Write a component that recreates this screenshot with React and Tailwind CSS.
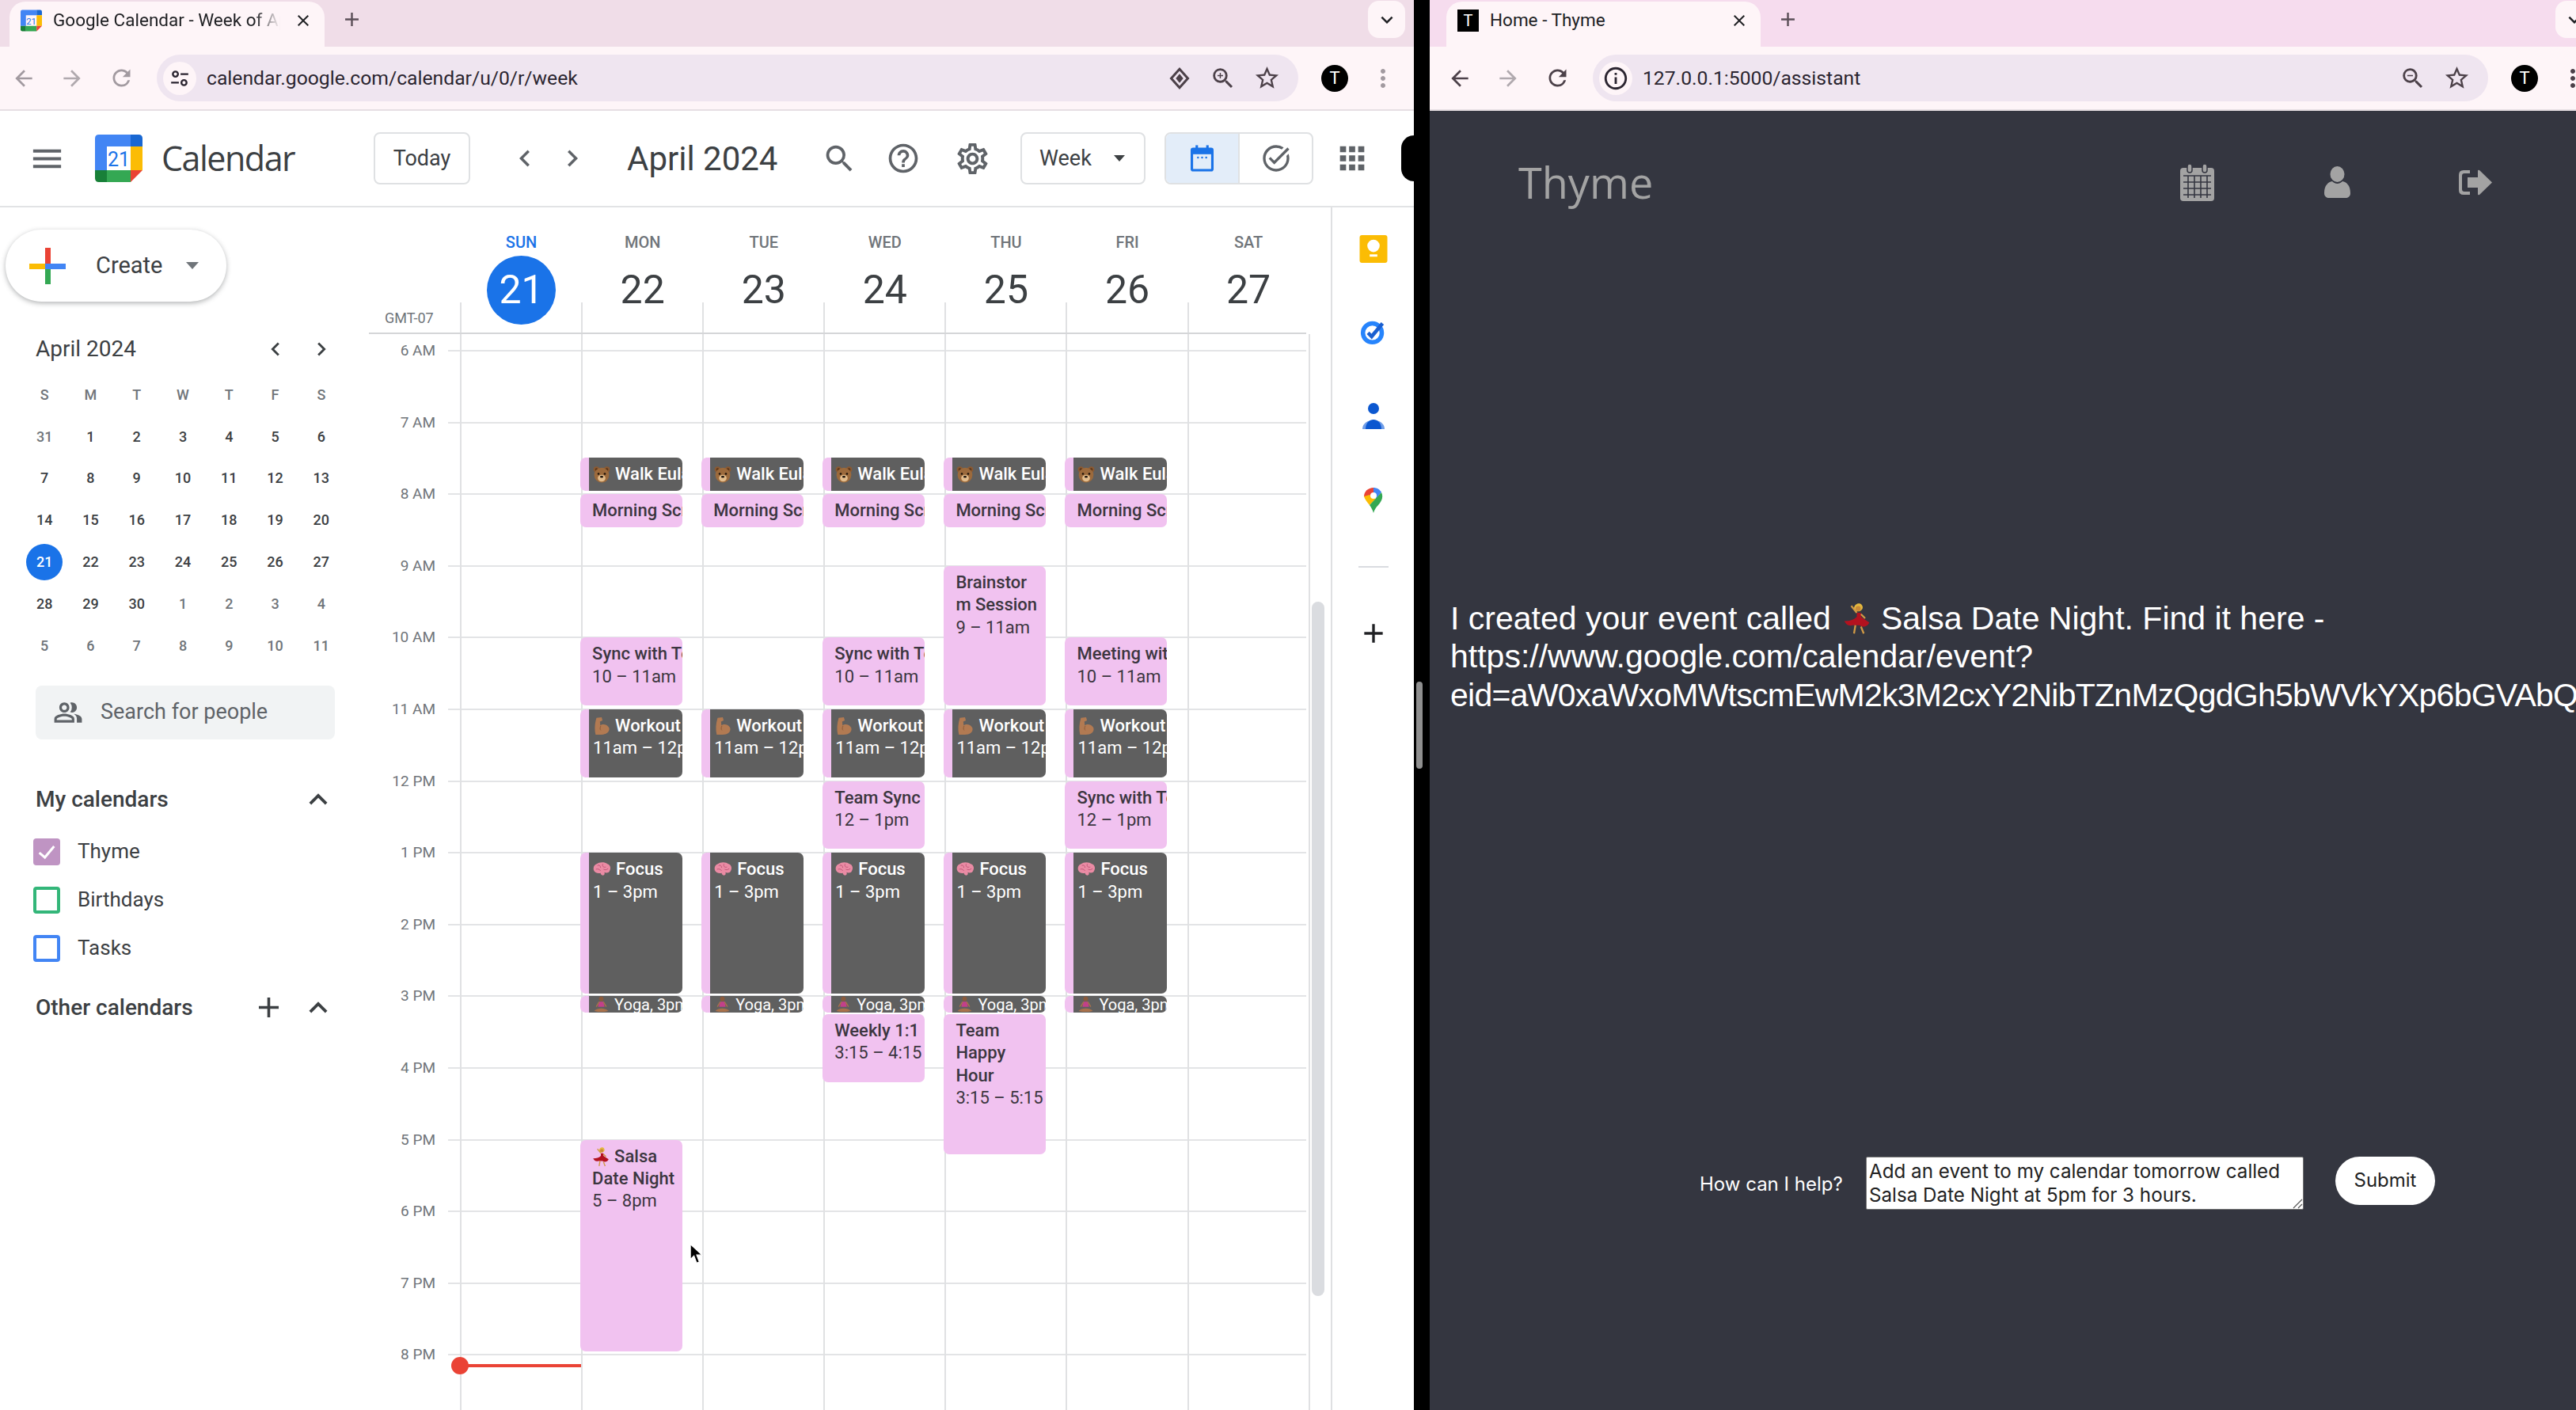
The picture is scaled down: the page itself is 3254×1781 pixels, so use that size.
import React from 'react';
import {
    MdAdd, MdApps, MdArrowBack, MdArrowForward, MdChevronLeft, MdChevronRight, MdClose, MdExpandLess, MdHelpOutline,
    MdInfoOutline, MdKeyboardArrowDown, MdMenu, MdMoreVert, MdOutlinePeopleAlt, MdOutlineSettings, MdOutlineTaskAlt,
    MdRefresh, MdSearch, MdStarBorder, MdZoomIn, MdZoomOut
} from 'react-icons/md';

const HOUR = 90.6;
const HOURS = ['6 AM', '7 AM', '8 AM', '9 AM', '10 AM', '11 AM', '12 PM', '1 PM', '2 PM', '3 PM', '4 PM', '5 PM', '6 PM', '7 PM', '8 PM', ''];

const Bear = () => (
    <svg viewBox="0 0 20 20" className="w-[22px] h-[22px] shrink-0">
        <circle cx="4" cy="4.5" r="3.4" fill="#8a5a33" />
        <circle cx="16" cy="4.5" r="3.4" fill="#8a5a33" />
        <circle cx="4" cy="4.5" r="1.6" fill="#5a3519" />
        <circle cx="16" cy="4.5" r="1.6" fill="#5a3519" />
        <ellipse cx="10" cy="11" rx="8.5" ry="8.5" fill="#9c6a3c" />
        <ellipse cx="10" cy="14.5" rx="4.4" ry="3.8" fill="#e3bd8d" />
        <circle cx="6.4" cy="9.5" r="1.2" fill="#1a1008" />
        <circle cx="13.6" cy="9.5" r="1.2" fill="#1a1008" />
        <ellipse cx="10" cy="13" rx="1.9" ry="1.2" fill="#1a1008" />
    </svg>
);

const Muscle = () => (
    <svg viewBox="0 0 20 22" className="w-[22px] h-[24px] shrink-0">
        <path d="M4 1.5 L10 1 L11 4.5 L8 6 L8.5 10.5 C11 8 16.5 9 18.5 13 C20 18 15 21 10 21 L3 21 C1.5 15 2 8 4 1.5 Z" fill="#b27a52" />
        <path d="M9 11 C8 13 8 15 9 16" stroke="#8c5a38" strokeWidth="0.9" fill="none" />
    </svg>
);

const Brain = () => (
    <svg viewBox="0 0 24 20" className="w-[23px] h-[22px] shrink-0">
        <path d="M5 3 C8 0 16 0 19 3 C23 4 24 9 22 12 C21 15 17 15 15 14 C16 16 15 18 13 18 C11 18 10 16 10 15 C6 16 2 14 1 11 C0 7 2 4 5 3 Z" fill="#ea8ba4" />
        <path d="M6 5 C8 4 10 5 10 8 M13 3 C12 6 14 8 17 7 M4 10 C6 9 9 10 10 12 M14 10 C16 11 18 11 20 9" stroke="#bf5577" strokeWidth="1" fill="none" />
    </svg>
);

const Yoga = () => (
    <svg viewBox="0 0 20 20" className="w-[21px] h-[21px] shrink-0">
        <circle cx="10" cy="3.5" r="2.8" fill="#8a5a3c" />
        <path d="M7.5 7 L12.5 7 L14 13 L6 13 Z" fill="#c2408a" />
        <path d="M1.5 18 C5 14 15 14 18.5 18 L14 19 L6 19 Z" fill="#a9714b" />
        <path d="M7.5 7 L4 13 M12.5 7 L16 13" stroke="#a9714b" strokeWidth="1.4" />
    </svg>
);

const Dancer = ({ className }) => (
    <svg viewBox="0 0 20 24" className={className}>
        <path d="M8 5 C8 1 13 0 14 3 C15 5 13 7 11 7 C9 7 8 6 8 5 Z" fill="#e4b83f" />
        <circle cx="11" cy="5" r="1.9" fill="#c98a38" />
        <path d="M10 8 L13 8 L13 11 L19 15 C18 18 14 19 12 17 L7 17 C4 18 2 16 1 14 C5 14 8 13 10 11 Z" fill="#b3121f" />
        <path d="M10 8 L6 3 M13 9 L16 12 M9 17 L8 23 M13 18 L15 23" stroke="#d19a45" strokeWidth="1.3" fill="none" />
    </svg>
);

// top and height in hours from 6am
const walk = { dark: true, top: 1.49, h: 0.46, icon: <Bear />, lines: ['Walk Eulah'] };
const morning = { top: 2.0, h: 0.46, lines: ['Morning Scrum'] };
const workout = { dark: true, top: 5.0, h: 0.95, icon: <Muscle />, lines: ['Workout', '11am – 12pm'] };
const focus = { dark: true, top: 7.0, h: 1.96, icon: <Brain />, lines: ['Focus', '1 – 3pm'] };
const yoga = { dark: true, yoga: true, top: 9.0, h: 0.23, icon: <Yoga />, lines: ['Yoga, 3pm'] };

const DAYS = [
    { name: 'SUN', num: 21, today: true, events: [] },
    {
        name: 'MON', num: 22, events: [walk, morning, { top: 4.0, h: 0.95, lines: ['Sync with Team', '10 – 11am'] }, workout, focus, yoga,
            { top: 11.0, h: 2.95, dancer: true, lines: ['Salsa', 'Date Night', '5 – 8pm'] }]
    },
    { name: 'TUE', num: 23, events: [walk, morning, workout, focus, yoga] },
    {
        name: 'WED', num: 24, events: [walk, morning, { top: 4.0, h: 0.95, lines: ['Sync with Team', '10 – 11am'] }, workout,
            { top: 6.0, h: 0.94, lines: ['Team Sync', '12 – 1pm'] }, focus, yoga, { top: 9.25, h: 0.95, lines: ['Weekly 1:1', '3:15 – 4:15'] }]
    },
    {
        name: 'THU', num: 25, events: [walk, morning, { top: 3.0, h: 1.95, lines: ['Brainstor', 'm Session', '9 – 11am'] }, workout, focus, yoga,
            { top: 9.25, h: 1.95, lines: ['Team', 'Happy', 'Hour', '3:15 – 5:15'] }]
    },
    {
        name: 'FRI', num: 26, events: [walk, morning, { top: 4.0, h: 0.95, lines: ['Meeting with', '10 – 11am'] }, workout,
            { top: 6.0, h: 0.94, lines: ['Sync with Team', '12 – 1pm'] }, focus, yoga]
    },
    { name: 'SAT', num: 27, events: [] },
];

const MINI = [
    [['31', 1], ['1'], ['2'], ['3'], ['4'], ['5'], ['6']],
    [['7'], ['8'], ['9'], ['10'], ['11'], ['12'], ['13']],
    [['14'], ['15'], ['16'], ['17'], ['18'], ['19'], ['20']],
    [['21', 2], ['22'], ['23'], ['24'], ['25'], ['26'], ['27']],
    [['28'], ['29'], ['30'], ['1', 1], ['2', 1], ['3', 1], ['4', 1]],
    [['5', 1], ['6', 1], ['7', 1], ['8', 1], ['9', 1], ['10', 1], ['11', 1]],
];

const ChromeBar = ({ tabIcon, title, url, siteIcon, extra, zoom, stripClass, tabClass, dropClass, barClass, toolbarClass, backClass, reloadClass, dotsClass }) => (
    <div className="font-['Roboto',sans-serif] shrink-0">
        <div className={`h-[59px] flex items-end ${stripClass}`}>
            <div className={`h-[57px] rounded-t-[20px] bg-[#fef5f8] flex items-center pl-[14px] pr-[15px] pb-[9px] shrink-0 ${tabClass}`}>
                {tabIcon}
                <span className="ml-[14px] flex-1 overflow-hidden whitespace-nowrap text-[22.5px] text-[#202124]">{title}</span>
                <MdClose size={24} className="text-[#202124] ml-2 shrink-0" />
            </div>
            <MdAdd size={29} className="ml-[20px] mb-[20px] text-[#5b4f58] shrink-0" />
            <div className="flex-1" />
            <div className={`self-start mt-[1px] w-[47px] h-[47px] rounded-[14px] bg-[#fef5f8] flex items-center justify-center shrink-0 ${dropClass}`}>
                <MdKeyboardArrowDown size={30} className="text-[#202124]" />
            </div>
        </div>
        <div className={`h-[81px] bg-[#fef5f8] border-b-2 border-[#e6dfe3] flex items-center ${toolbarClass}`}>
            <MdArrowBack size={32} className={`shrink-0 ${backClass}`} />
            <MdArrowForward size={32} className="ml-[29px] text-[#b0a9ae] shrink-0" />
            <MdRefresh size={33} className={`ml-[29.5px] shrink-0 ${reloadClass}`} />
            <div className={`ml-[28.5px] shrink-0 h-[59px] rounded-full bg-[#efe5f0] flex items-center pl-[8px] pr-[22.5px] ${barClass}`}>
                <div className="w-[42px] h-[42px] rounded-full bg-[#fef5f8] flex items-center justify-center">{siteIcon}</div>
                <span className="ml-[13px] text-[24.7px] text-[#2b2530]">{url}</span>
                <div className="flex-1" />
                {extra}
                {zoom}
                <MdStarBorder size={35} className="text-[#4c4149] ml-[20.5px]" />
            </div>
            <div className="ml-[29px] w-[34px] h-[34px] rounded-full bg-black text-white flex items-center justify-center text-[22px] shrink-0">T</div>
            <MdMoreVert size={36} className={`ml-[26px] shrink-0 ${dotsClass}`} />
        </div>
    </div>
);

const CalLogo = () => (
    <svg viewBox="0 0 36 36" className="w-full h-full">
        <path d="M3 0 H27 V9 H9 V27 H0 V3 Q0 0 3 0 Z" fill="#4285f4" />
        <path d="M27 0 H33 Q36 0 36 3 V9 H27 Z" fill="#1967d2" />
        <rect x="27" y="9" width="9" height="18" fill="#fbbc04" />
        <rect x="9" y="27" width="18" height="9" fill="#34a853" />
        <path d="M0 27 H9 V36 H3 Q0 36 0 33 Z" fill="#188038" />
        <path d="M27 36 L36 27 H27 Z" fill="#ea4335" />
        <text x="18" y="24" textAnchor="middle" fontSize="15" fill="#1a73e8" fontFamily="Roboto, sans-serif">21</text>
    </svg>
);

const Event = ({ ev }) => {
    const base = ev.dark ? 'bg-[#5f5f5f] text-white border-l-[11px] border-[#f1c2f0]' : 'bg-[#f1c2f0] text-[#3c3640]';
    const pad = ev.dark ? 'pl-[5px]' : 'pl-[15px]';
    const single = ev.lines.length === 1;
    return (
        <div
            className={`absolute left-[-3px] w-[129px] rounded-[7px] overflow-hidden whitespace-nowrap ${base} ${pad}`}
            style={{ top: ev.top * HOUR, height: ev.h * HOUR }}
        >
            {ev.yoga ? (
                <div className="flex items-center h-full text-[20px] gap-[6px] leading-none"><span className="shrink-0 flex">{ev.icon}</span>{ev.lines[0]}</div>
            ) : (
                <div className="pt-[7px] text-[22px] leading-[28.4px]">
                    {ev.lines.map((line, i) => (
                        <div key={i} className={`h-[28.4px] flex items-center gap-[6px] ${i === ev.lines.length - 1 && !single ? 'font-normal' : 'font-medium'}`}>
                            {i === 0 && ev.icon}
                            {i === 0 && ev.dancer && <Dancer className="w-[22px] h-[26px] shrink-0" />}
                            <span>{line}</span>
                        </div>
                    ))}
                </div>
            )}
        </div>
    );
};

const CalendarPane = () => (
    <div className="w-[1786px] shrink-0 h-full flex flex-col bg-white overflow-hidden font-['Roboto',sans-serif]">
        <ChromeBar
            stripClass="bg-[#f0dde8]"
            tabClass="ml-[12px] w-[398px]"
            dropClass="mr-[11px]"
            toolbarClass="pl-[14px]"
            barClass="w-[1442px]"
            backClass="text-[#a29aa0]"
            reloadClass="text-[#a29aa0]"
            dotsClass="text-[#a29aa0]"
            tabIcon={<div className="w-[27px] h-[28px] shrink-0"><CalLogo /></div>}
            title={<span className="[mask-image:linear-gradient(to_right,black_86%,transparent_97%)] block">Google Calendar - Week of April</span>}
            url="calendar.google.com/calendar/u/0/r/week"
            siteIcon={
                <svg viewBox="0 0 24 24" className="w-[26px] h-[26px]" fill="none" stroke="#2b2530" strokeWidth="2.2">
                    <circle cx="7" cy="7" r="3" /><path d="M13 7 H22 M2 17 H11" /><circle cx="17" cy="17" r="3" />
                </svg>
            }
            extra={
                <svg viewBox="0 0 24 24" className="w-[28px] h-[28px]">
                    <path d="M12 2 L21 12 L12 22 L3 12 Z" fill="none" stroke="#4c4149" strokeWidth="2.6" />
                    <path d="M12 7 L16 12 L12 17 L8 12 Z" fill="#4c4149" />
                </svg>
            }
            zoom={<MdZoomIn size={34} className="text-[#4c4149] ml-[24px]" />}
        />

        {/* Top bar */}
        <div className="h-[122px] shrink-0 border-b-2 border-[#e2e3e5] flex items-center text-[#3c4043]">
            <MdMenu size={47} className="ml-[36px] text-[#5f6368] shrink-0" />
            <div className="ml-[37px] w-[60px] h-[60px] shrink-0"><CalLogo /></div>
            <span className="ml-[24px] w-[172px] shrink-0 text-[43px] text-[#3c4043] font-['Open_Sans',sans-serif] tracking-[-1.5px]">Calendar</span>
            <div className="ml-[96px] w-[122px] h-[66px] shrink-0 border-2 border-[#dfe1e3] rounded-[8px] flex items-center justify-center text-[27px]">Today</div>
            <MdChevronLeft size={42} className="ml-[48px] text-[#5f6368] shrink-0" />
            <MdChevronRight size={42} className="ml-[18px] text-[#5f6368] shrink-0" />
            <span className="ml-[48px] w-[188px] shrink-0 whitespace-nowrap text-[42px] text-[#3c4043]">April 2024</span>
            <MdSearch size={45} className="ml-[58px] text-[#5f6368] shrink-0" />
            <MdHelpOutline size={44} className="ml-[36px] text-[#5f6368] shrink-0" />
            <MdOutlineSettings size={47} className="ml-[41.5px] text-[#5f6368] shrink-0" />
            <div className="ml-[37.5px] w-[158px] h-[66px] shrink-0 border-2 border-[#dfe1e3] rounded-[8px] flex items-center pl-[22px] text-[27px]">
                Week<span className="ml-[28px] w-0 h-0 border-x-[7px] border-x-transparent border-t-[8px] border-t-[#3c4043]"></span>
            </div>
            <div className="ml-[24px] w-[188px] h-[66px] shrink-0 border-2 border-[#dfe1e3] rounded-[8px] flex overflow-hidden">
                <div className="w-[93px] bg-[#e3edf9] border-r-2 border-[#dfe1e3] flex items-center justify-center">
                    <svg viewBox="0 0 28 32" className="w-[29px] h-[34px]">
                        <rect x="6" y="0" width="3" height="6" fill="#1a73e8" />
                        <rect x="19" y="0" width="3" height="6" fill="#1a73e8" />
                        <rect x="0" y="3" width="28" height="29" rx="3" fill="#1a73e8" />
                        <rect x="3" y="11" width="22" height="18" fill="#e3edf9" />
                        <circle cx="9" cy="15" r="1.2" fill="#1a73e8" /><circle cx="14" cy="15" r="1.2" fill="#1a73e8" /><circle cx="19" cy="15" r="1.2" fill="#1a73e8" />
                    </svg>
                </div>
                <div className="flex-1 flex items-center justify-center"><MdOutlineTaskAlt size={40} className="text-[#5f6368]" /></div>
            </div>
            <MdApps size={46} className="ml-[26px] text-[#5f6368] shrink-0" />
            <div className="ml-[39px] w-[16px] h-[58px] rounded-l-[28px] bg-black shrink-0" />
        </div>

        <div className="flex-1 flex min-h-0">
            {/* Sidebar */}
            <div className="w-[466px] shrink-0 relative">
                <div className="mt-[28px] ml-[7px] w-[279px] h-[91px] rounded-full bg-white shadow-[0_2px_6px_rgba(60,64,67,0.4)] flex items-center pl-[30px]">
                    <svg viewBox="0 0 46 46" className="w-[46px] h-[46px]">
                        <rect x="20" y="0" width="7" height="24" fill="#ea4335" />
                        <rect x="0" y="20" width="24" height="7" fill="#fbbc04" />
                        <rect x="20" y="24" width="7" height="22" fill="#34a853" />
                        <rect x="20" y="20" width="26" height="7" fill="#4285f4" />
                    </svg>
                    <span className="ml-[38px] text-[29px] text-[#3c4043]">Create</span>
                    <span className="ml-[30px] w-0 h-0 border-x-[8px] border-x-transparent border-t-[9px] border-t-[#70757a]"></span>
                </div>

                <div className="mt-[45px] ml-[45px] mr-[43px] flex items-center h-[30px]">
                    <span className="text-[28px] text-[#3c4043]">April 2024</span>
                    <div className="flex-1" />
                    <MdChevronLeft size={34} className="text-[#3c4043]" />
                    <MdChevronRight size={34} className="ml-[24px] text-[#3c4043]" />
                </div>

                <div className="mt-[16px] ml-[27px] w-[408px] grid grid-cols-7 text-[18px] font-medium text-center">
                    {['S', 'M', 'T', 'W', 'T', 'F', 'S'].map((d, i) => <div key={i} className="h-[52.8px] flex items-center justify-center text-[#70757a]">{d}</div>)}
                    {MINI.flat().map(([d, kind], i) => (
                        <div key={i} className={`h-[52.8px] flex items-center justify-center ${kind === 1 ? 'text-[#70757a]' : 'text-[#3c4043]'}`}>
                            {kind === 2
                                ? <span className="w-[46px] h-[46px] rounded-full bg-[#1a73e8] text-white flex items-center justify-center">{d}</span>
                                : d}
                        </div>
                    ))}
                </div>

                <div className="mt-[24px] ml-[45px] w-[378px] h-[68px] rounded-[8px] bg-[#f1f3f4] flex items-center pl-[22px] text-[#5f6368]">
                    <MdOutlinePeopleAlt size={38} />
                    <span className="ml-[22px] text-[27px]">Search for people</span>
                </div>

                <div className="mt-[56px] ml-[45px] mr-[41px] flex items-center h-[40px] text-[#3c4043]">
                    <span className="text-[28px] font-medium">My calendars</span>
                    <div className="flex-1" />
                    <MdExpandLess size={46} />
                </div>

                <div className="mt-[29px] ml-[42px] flex flex-col gap-[27px] text-[26px] text-[#3c4043]">
                    <div className="flex items-center h-[34px]">
                        <span className="w-[34px] h-[34px] rounded-[4px] bg-[#bf94c3] flex items-center justify-center">
                            <svg viewBox="0 0 24 24" className="w-[28px] h-[28px]"><path d="M4 13 L10 18 L20 6" stroke="#fff" strokeWidth="2.6" fill="none" /></svg>
                        </span>
                        <span className="ml-[22px]">Thyme</span>
                    </div>
                    <div className="flex items-center h-[34px]">
                        <span className="w-[34px] h-[34px] rounded-[4px] border-[4px] border-[#33b679]"></span>
                        <span className="ml-[22px]">Birthdays</span>
                    </div>
                    <div className="flex items-center h-[34px]">
                        <span className="w-[34px] h-[34px] rounded-[4px] border-[4px] border-[#4285f4]"></span>
                        <span className="ml-[22px]">Tasks</span>
                    </div>
                </div>

                <div className="mt-[38px] ml-[45px] mr-[41px] flex items-center h-[40px] text-[#3c4043]">
                    <span className="text-[28px] font-medium">Other calendars</span>
                    <div className="flex-1" />
                    <MdAdd size={43} />
                    <MdExpandLess size={46} className="ml-[18.5px]" />
                </div>
            </div>

            {/* Week grid */}
            <div className="flex-1 min-w-0 relative">
                <div className="h-[158px] flex pl-[116px] w-[1220px]">
                    {DAYS.map((d) => (
                        <div key={d.name} className="w-[153.1px] shrink-0 relative flex flex-col items-center pt-[32px]">
                            <div className="absolute left-[-1px] bottom-0 w-[2px] h-[38px] bg-[#e0e1e3]" />
                            <span className={`text-[20px] font-medium leading-[24px] ${d.today ? 'text-[#1a73e8]' : 'text-[#70757a]'}`}>{d.name}</span>
                            <span className={`relative mt-[5px] w-[87px] h-[87px] rounded-full flex items-center justify-center text-[50px] ${d.today ? 'bg-[#1a73e8] text-white' : 'text-[#3c4043]'}`}>{d.num}</span>
                        </div>
                    ))}
                </div>
                <div className="absolute left-[20px] top-[126px] text-[18px] text-[#70757a]">GMT-07</div>

                <div className="relative w-[1184px] border-t-2 border-[#d5d6d8]">
                    <div className="h-[20px]" />
                    {/* hour rows */}
                    {HOURS.map((h, i) => (
                        <div key={i} className="h-[90.6px] flex items-start">
                            <span className="w-[84px] text-right text-[19px] leading-none text-[#70757a] -mt-[9px] whitespace-nowrap">{h}</span>
                            <div className="ml-[16px] flex-1 border-t-2 border-[#e3e4e6]" />
                        </div>
                    ))}
                    {/* day columns over the hour rows */}
                    <div className="absolute left-[115px] top-0 bottom-0 flex">
                        {DAYS.map((d) => (
                            <div key={d.name} className="w-[153.1px] shrink-0 border-l-2 border-[#e0e1e3] relative">
                                <div className="absolute inset-x-0 top-[21px]">
                                    {d.events.map((ev, i) => <Event key={i} ev={ev} />)}
                                </div>
                            </div>
                        ))}
                        <div className="border-l-2 border-[#e0e1e3]" />
                    </div>
                    {/* now line */}
                    <div className="absolute left-[106px] top-[1301px] w-[162px] h-[4px] bg-[#ea4335]" />
                    <div className="absolute left-[104px] top-[1292px] w-[22px] h-[22px] rounded-full bg-[#ea4335]" />
                </div>

                {/* cursor */}
                <svg viewBox="0 0 16 24" className="absolute left-[405px] top-[1307px] w-[18px] h-[30px]">
                    <path d="M1 1 L1 18 L5 14 L8 22 L11 21 L8 13 L14 13 Z" fill="#000" stroke="#fff" strokeWidth="1" />
                </svg>

                {/* scrollbar */}
                <div className="absolute left-[1191px] top-[498px] w-[16px] h-[877px] rounded-full bg-[#dadce0]" />
            </div>

            {/* Side panel */}
            <div className="w-[105px] shrink-0 border-l-2 border-[#dfe0e2] flex flex-col items-center">
                <svg viewBox="0 0 36 36" className="mt-[35px] w-[36px] h-[35px]">
                    <rect width="36" height="36" rx="3" fill="#fbbc04" />
                    <circle cx="18" cy="14" r="8" fill="#fff" />
                    <rect x="13" y="25" width="10" height="3" fill="#fff" />
                </svg>
                <svg viewBox="0 0 36 36" className="mt-[71px] w-[33px] h-[33px]">
                    <circle cx="17" cy="19" r="13" fill="none" stroke="#2684fc" strokeWidth="6" />
                    <path d="M11 19 L16 24 L31 6" fill="none" stroke="#1a5fd0" strokeWidth="5" />
                </svg>
                <svg viewBox="0 0 28 33" className="mt-[73px] w-[28px] h-[33px]">
                    <path d="M0 33 C0 18 28 18 28 33 Z" fill="#6f9de8" />
                    <circle cx="14" cy="7" r="7" fill="#0b57d0" />
                    <path d="M4 33 C4 17 24 17 24 33 Z" fill="#0b57d0" />
                </svg>
                <svg viewBox="0 0 24 32" className="mt-[74px] w-[24px] h-[32px]">
                    <path d="M12 0 C5 0 0 5 0 11 L7 15 L12 6 Z" fill="#ea4335" />
                    <path d="M12 0 C16 0 20 2 22 6 L15 14 L12 6 Z" fill="#4285f4" />
                    <path d="M0 11 C1 15 4 18 7 22 L15 14 L7 9 Z" fill="#fbbc04" />
                    <path d="M22 6 C25 12 22 17 18 22 C15 25 13 28 12 32 C11 28 9 25 7 22 Z" fill="#34a853" />
                    <circle cx="12" cy="10" r="4" fill="#fff" />
                </svg>
                <div className="mt-[67px] w-[38px] h-[2px] bg-[#dadce0]" />
                <MdAdd size={40} className="mt-[63px] text-[#202124]" />
            </div>
        </div>
    </div>
);

const ThymePane = () => (
    <div className="flex-1 min-w-0 h-full flex flex-col overflow-hidden bg-[#343640] font-['Liberation_Sans',sans-serif]">
        <ChromeBar
            stripClass="bg-[#f6dcee]"
            tabClass="ml-[21px] w-[397px]"
            dropClass="mr-[-21px]"
            toolbarClass="pl-[22px]"
            barClass="w-[1131px]"
            backClass="text-[#4c4149]"
            reloadClass="text-[#4c4149]"
            dotsClass="text-[#4c4149]"
            tabIcon={<div className="w-[27px] h-[28px] shrink-0 bg-black text-white flex items-center justify-center text-[20px]">T</div>}
            title="Home - Thyme"
            url="127.0.0.1:5000/assistant"
            siteIcon={<MdInfoOutline size={34} className="text-[#2b2530]" />}
            zoom={<MdZoomOut size={34} className="text-[#4c4149]" />}
        />
        <div className="h-[180px] shrink-0 flex items-center pl-[112px] text-[#a3a3a3]">
            <span className="text-[54px] font-['Open_Sans',sans-serif]">Thyme</span>
            <div className="flex-1" />
            <svg viewBox="0 0 43 47" className="w-[43px] h-[47px] mr-[139px]">
                <path d="M4 5 H39 Q43 5 43 9 V43 Q43 47 39 47 H4 Q0 47 0 43 V9 Q0 5 4 5 Z" fill="#a3a3a3" />
                <rect x="9" y="0" width="6" height="11" rx="3" fill="#a3a3a3" stroke="#343640" strokeWidth="1.5" />
                <rect x="28" y="0" width="6" height="11" rx="3" fill="#a3a3a3" stroke="#343640" strokeWidth="1.5" />
                <path d="M4 15 H39 M4 23 H39 M4 31 H39 M4 39 H39 M10 15 V43 M18 15 V43 M26 15 V43 M34 15 V43" stroke="#343640" strokeWidth="1.6" />
            </svg>
            <svg viewBox="0 0 33 40" className="w-[33px] h-[40px] mr-[137px]" fill="#a3a3a3">
                <ellipse cx="16.5" cy="10" rx="9" ry="10" />
                <path d="M0 34 C0 24 5 20 10 19 C14 23 19 23 23 19 C28 20 33 24 33 34 C33 38 30 40 27 40 L6 40 C3 40 0 38 0 34 Z" />
            </svg>
            <svg viewBox="0 0 42 33" className="w-[42px] h-[33px] mr-[106px]" fill="#a3a3a3">
                <path d="M14 1 L6 1 Q0 1 0 7 L0 26 Q0 32 6 32 L14 32 L14 28 L7 28 Q4 28 4 25 L4 8 Q4 5 7 5 L14 5 Z" />
                <path d="M11 10 L24 10 L24 2 Q24 0 26 1 L42 16.5 L26 32 Q24 33 24 31 L24 23 L11 23 Z" />
            </svg>
        </div>
        <div className="mt-[436.5px] pl-[26px] text-[41px] leading-[48.5px] text-white whitespace-nowrap">
            <div className="flex items-center h-[48.5px]">
                <span>I created your event called</span>
                <Dancer className="w-[37px] h-[42px] ml-[14px] mr-[12px] shrink-0" />
                <span>Salsa Date Night. Find it here -</span>
            </div>
            <div>https://www.google.com/calendar/event?</div>
            <div className="tracking-[-0.75px]">eid=aW0xaWxoMWtscmEwM2k3M2cxY2NibTZnMzQgdGh5bWVkYXp6bGVAbQ</div>
        </div>
        <div className="mt-[558.5px] flex items-start pl-[341px] font-['Inter',sans-serif]">
            <span className="w-[181px] shrink-0 whitespace-nowrap pt-[18px] text-[24px] leading-[34px] text-white">How can I help?</span>
            <div className="relative ml-[29px] w-[553px] h-[67px] shrink-0 whitespace-nowrap bg-white border border-[#767676] rounded-[2px] text-[24.2px] leading-[30px] text-[#222] pl-[3px] pt-[3px]">
                Add an event to my calendar tomorrow called<br />Salsa Date Night at 5pm for 3 hours.
                <svg viewBox="0 0 14 14" className="absolute right-0 bottom-0 w-[14px] h-[14px]">
                    <path d="M2 13 L13 2 M8 13 L13 8" stroke="#555" strokeWidth="1.2" />
                </svg>
            </div>
            <div className="ml-[40px] w-[126px] h-[61px] shrink-0 rounded-full bg-white flex items-center justify-center text-[24px] text-[#222]">Submit</div>
        </div>
    </div>
);

export default function App() {
    return (
        <div className="w-[3254px] h-[1781px] flex overflow-hidden bg-black">
            <CalendarPane />
            <div className="w-[20px] shrink-0 bg-black relative">
                <div className="absolute left-[3px] top-[861px] w-[8px] h-[110px] rounded-full bg-[#8f8f8f]" />
            </div>
            <ThymePane />
        </div>
    );
}
